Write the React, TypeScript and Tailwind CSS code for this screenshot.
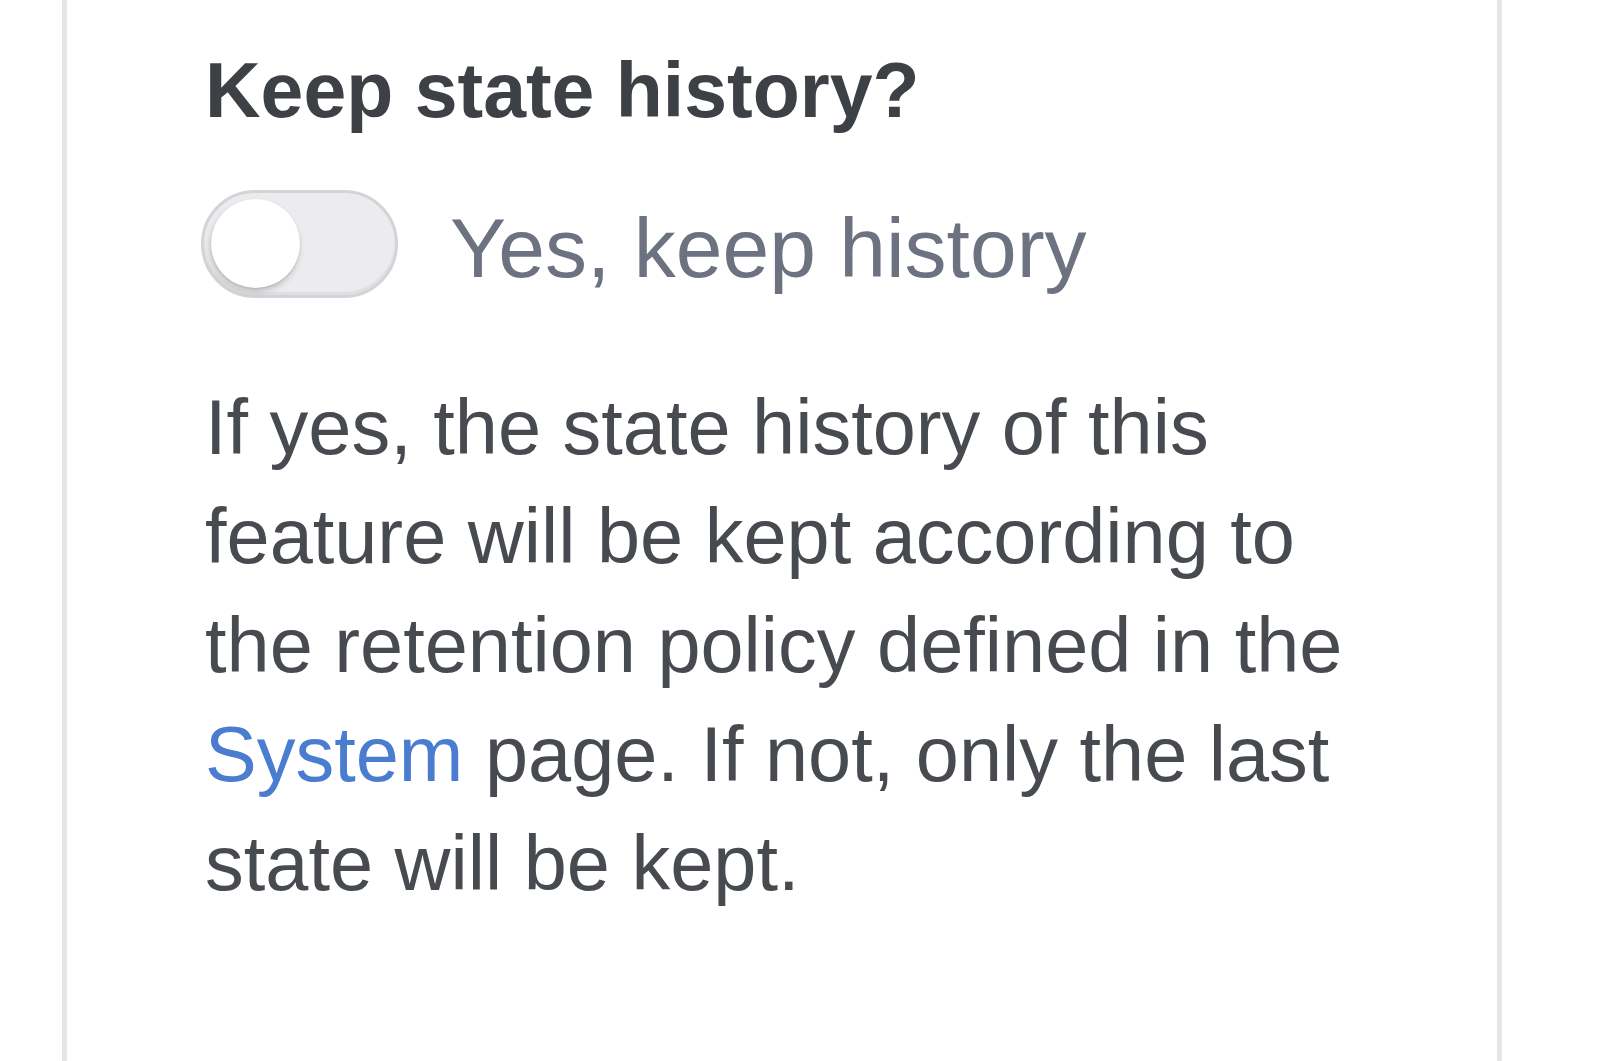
import React from "react";

export default function App() {
  return (
    <div className="min-h-screen w-full bg-white" style={{ fontFamily: '"Liberation Sans", Arial, sans-serif' }}>
      <div className="ml-[62px] w-[1440px] h-[1061px] border-x-[5px] border-[#e6e6ea] bg-white pl-[138px] pt-[46px]">
        <h2 className="text-[77px] leading-[88px] font-bold text-[#3d4146] whitespace-nowrap">
          Keep state history?
        </h2>
        <div className="mt-[56px] flex items-center">
          <button
            type="button"
            aria-pressed="false"
            className="relative ml-[-4px] h-[108px] w-[197px] shrink-0 rounded-full border-[3px] border-[#d3d4d8] bg-[#ececef] shadow-[inset_0_-3px_2px_rgba(0,0,0,0.06)]"
          >
            <span className="absolute left-[7px] top-[6px] block h-[89px] w-[89px] rounded-full bg-white shadow-[-1px_4px_6px_rgba(0,0,0,0.18),0_1px_2px_rgba(0,0,0,0.1)]" />
          </button>
          <span className="ml-[52px] pt-[8px] text-[84px] leading-none text-[#6c7280] whitespace-nowrap">
            Yes, keep history
          </span>
        </div>
        <p className="mt-[75px] text-[77.5px] leading-[109px] text-[#474b50] whitespace-nowrap">
          If yes, the state history of this
          <br />
          feature will be kept according to
          <br />
          the retention policy defined in the
          <br />
          <a href="#" className="text-[#4a7ccf]">System</a> page. If not, only the last
          <br />
          state will be kept.
        </p>
      </div>
    </div>
  );
}
